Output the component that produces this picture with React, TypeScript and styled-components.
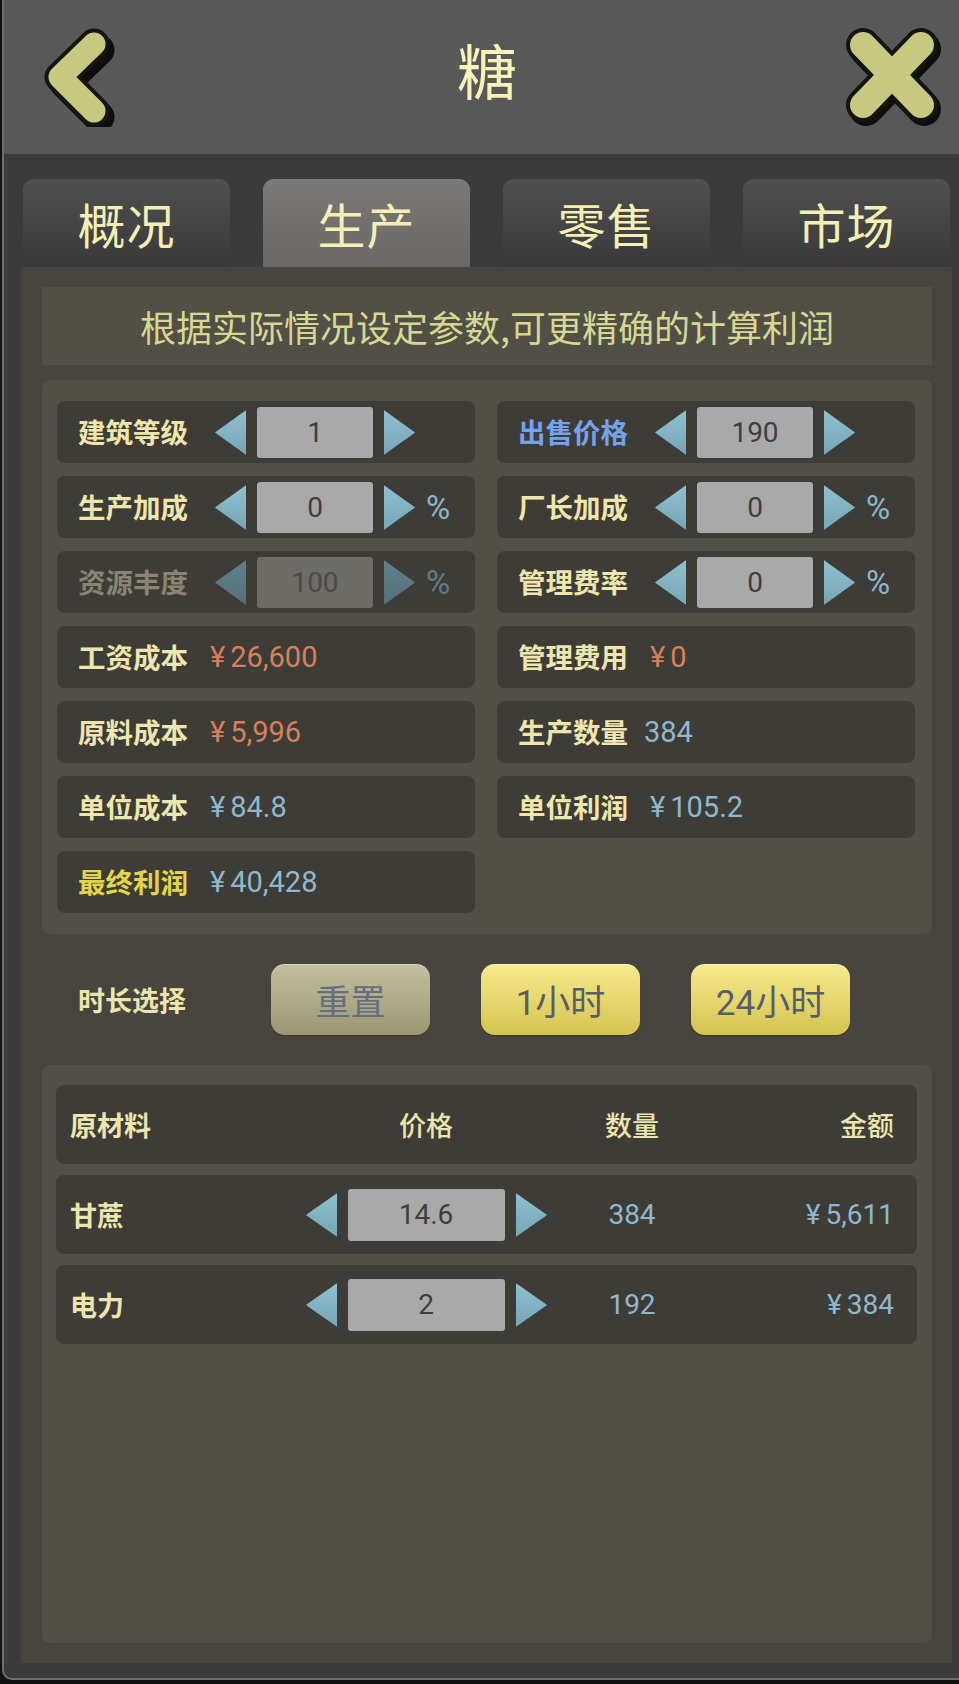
import React from 'react';
import styled, { createGlobalStyle } from 'styled-components';

const GlobalStyle = createGlobalStyle`
  html, body { margin: 0; padding: 0; background: #121212; }
  body { font-family: "Noto Sans CJK SC", Roboto, sans-serif; }
  * { box-sizing: border-box; }
`;

const CJK = `"Noto Sans CJK SC", "Noto Sans", sans-serif`;
const NUM = `Roboto, "Noto Sans CJK SC", sans-serif`;

const Frame = styled.div`
  margin-left: 2px;
  width: 957px;
  height: 1680px;
  border-left: 2px solid #6e6e6e;
  border-bottom: 2px solid #6e6e6e;
  border-bottom-left-radius: 10px;
  background: #3b3b3b;
  display: flex;
  flex-direction: column;
  overflow: hidden;
`;

const Header = styled.header`
  height: 154px;
  flex: none;
  background: #585858;
  display: flex;
  align-items: center;
  justify-content: space-between;
  padding: 0 12px 0 37px;
`;

const Title = styled.h1`
  margin: 0 0 0 18px;
  font-family: ${CJK};
  font-weight: 400;
  font-size: 60px;
  line-height: 1;
  color: #f8f3b8;
  transform: translateY(-8px);
`;

const IconButton = styled.div`
  display: flex;
  align-items: center;
  justify-content: center;
`;

const Body = styled.main`
  flex: 1;
  display: flex;
  flex-direction: column;
  padding: 25px 7px 15px 17px;
`;

const TabRow = styled.nav`
  display: flex;
  gap: 33px;
  padding: 0 2px;
  height: 88px;
  flex: none;
`;

const Tab = styled.div<{ $active?: boolean }>`
  flex: 1;
  display: flex;
  align-items: center;
  justify-content: center;
  border-radius: 11px 11px 0 0;
  background: ${(p) =>
    p.$active
      ? 'linear-gradient(#7b7977, #6a6865)'
      : 'linear-gradient(#505050, #393939)'};
  font-family: ${CJK};
  font-size: 48px;
  color: #f4efb6;
  letter-spacing: 1px;
`;

const Panel = styled.section`
  flex: 1;
  background: #47453e;
  padding: 20px 20px 20px 21px;
  display: flex;
  flex-direction: column;
`;

const Banner = styled.div`
  height: 78px;
  flex: none;
  background: #524f47;
  display: flex;
  align-items: center;
  justify-content: center;
  font-family: ${CJK};
  font-size: 36px;
  color: #d6d892;
  margin-bottom: 15px;
`;

const Card = styled.div`
  background: #524f47;
  border-radius: 8px;
`;

const ParamGrid = styled(Card)`
  flex: none;
  display: grid;
  grid-template-columns: 1fr 1fr;
  grid-auto-rows: 62px;
  column-gap: 22px;
  row-gap: 13px;
  padding: 21px 17px 21px 15px;
`;

const ParamRow = styled.div`
  background: #3e3c37;
  border-radius: 8px;
  display: flex;
  align-items: center;
  padding-left: 21px;
`;

type Tone = 'normal' | 'blue' | 'gold' | 'muted';
const labelColors: Record<Tone, string> = {
  normal: '#efe6ae',
  blue: '#74a2ee',
  gold: '#e2d648',
  muted: '#898570',
};

const Label = styled.span<{ $w: number; $tone?: Tone }>`
  width: ${(p) => p.$w}px;
  flex: none;
  font-family: ${CJK};
  font-weight: 700;
  font-size: 27.5px;
  line-height: 1;
  color: ${(p) => labelColors[p.$tone || 'normal']};
`;

const Value = styled.span<{ $color: 'orange' | 'blue' }>`
  font-family: ${NUM};
  font-size: 29px;
  color: ${(p) => (p.$color === 'orange' ? '#d97f5b' : '#8fb8cf')};
`;

const Yen = styled.span`
  margin-right: 5px;
`;

const InputBox = styled.div<{ $w: number; $h: number; $disabled?: boolean }>`
  width: ${(p) => p.$w}px;
  height: ${(p) => p.$h}px;
  flex: none;
  border-radius: 3px;
  background: ${(p) => (p.$disabled ? '#6e6c67' : '#a9a9a9')};
  color: ${(p) => (p.$disabled ? '#4a4a47' : '#3e3e3e')};
  font-family: ${NUM};
  font-size: 28px;
  display: flex;
  align-items: center;
  justify-content: center;
`;

const Stepper = styled.div<{ $gap: number }>`
  display: flex;
  align-items: center;
  gap: ${(p) => p.$gap}px;
`;

const Percent = styled.span<{ $disabled?: boolean }>`
  font-family: ${NUM};
  font-size: 33px;
  color: ${(p) => (p.$disabled ? '#627c86' : '#8db6cb')};
  margin-left: 11px;
`;

const DurationRow = styled.div`
  height: 131px;
  flex: none;
  display: flex;
  align-items: center;
  padding-left: 36px;
`;

const DurationLabel = styled.span`
  width: 193px;
  font-family: ${CJK};
  font-weight: 700;
  font-size: 27px;
  color: #ece4ae;
`;

const ButtonGroup = styled.div`
  display: flex;
  gap: 51px;
`;

const TimeButton = styled.div<{ $reset?: boolean }>`
  width: 159px;
  height: 71px;
  border-radius: 14px;
  display: flex;
  align-items: center;
  justify-content: center;
  font-family: ${(p) => (p.$reset ? CJK : NUM)};
  font-size: 35px;
  color: ${(p) => (p.$reset ? '#646e80' : '#565e6a')};
  background: ${(p) =>
    p.$reset
      ? 'linear-gradient(#c3bf9f, #9b9773)'
      : 'linear-gradient(#f7ea8e, #d5c350)'};
  box-shadow: inset 0 1px 0 rgba(255, 255, 255, 0.35), 0 1px 1px rgba(0, 0, 0, 0.25);
`;

const MaterialCard = styled(Card)`
  flex: 1;
  display: flex;
  flex-direction: column;
  gap: 11px;
  padding: 20px 15px 20px 14px;
`;

const TableRow = styled.div`
  height: 79px;
  flex: none;
  background: #3e3c37;
  border-radius: 8px;
  display: grid;
  grid-template-columns: 236px 240px 172px 1fr;
  align-items: center;
  padding: 0 23px 0 14px;
`;

const Cell = styled.div<{ $align?: 'left' | 'center' | 'right' }>`
  display: flex;
  justify-content: ${(p) =>
    p.$align === 'center' ? 'center' : p.$align === 'right' ? 'flex-end' : 'flex-start'};
`;

const HeadText = styled.span<{ $bold?: boolean }>`
  font-family: ${CJK};
  font-weight: ${(p) => (p.$bold ? 700 : 500)};
  font-size: 27px;
  color: #ede5ae;
`;

const NumText = styled.span`
  font-family: ${NUM};
  font-size: 28px;
  color: #8fb8cf;
`;

const ArrowSvg = styled.svg`
  flex: none;
  display: block;
`;

let gid = 0;
const Arrow: React.FC<{ dir: 'left' | 'right'; disabled?: boolean; h?: number }> = ({
  dir,
  disabled,
  h = 45,
}) => {
  const id = React.useMemo(() => `ag${gid++}`, []);
  const pts = dir === 'left' ? `1,${h / 2} 31,1 31,${h - 1}` : `0,1 30,${h / 2} 0,${h - 1}`;
  return (
    <ArrowSvg width={31} height={h} viewBox={`0 0 31 ${h}`}>
      <defs>
        <linearGradient id={id} x1="0" y1="0" x2="0" y2="1">
          <stop offset="0" stopColor={disabled ? '#60808a' : '#8fc0cf'} />
          <stop offset="1" stopColor={disabled ? '#56707a' : '#76a6b6'} />
        </linearGradient>
      </defs>
      <polygon points={pts} fill={`url(#${id})`} strokeLinejoin="round" stroke={`url(#${id})`} strokeWidth={1.5} />
    </ArrowSvg>
  );
};

const BackIcon = () => (
  <svg width="74" height="100" viewBox="0 0 74 100">
    <polyline points="55,19 21,52 55,86" fill="none" stroke="#0e0e0c" strokeWidth="31" strokeLinecap="round" strokeLinejoin="round" transform="translate(3,4)" />
    <polyline points="53,17 19,50 53,84" fill="none" stroke="#15150f" strokeWidth="31" strokeLinecap="round" strokeLinejoin="round" />
    <polyline points="53,17 19,50 53,84" fill="none" stroke="#c8c880" strokeWidth="23" strokeLinecap="round" strokeLinejoin="round" />
  </svg>
);

const CloseIcon = () => (
  <svg width="106" height="104" viewBox="0 0 106 104">
    <g transform="translate(3,4)" stroke="#0e0e0c" strokeWidth="34" strokeLinecap="round">
      <line x1="22" y1="20" x2="80" y2="80" />
      <line x1="80" y1="20" x2="22" y2="80" />
    </g>
    <g stroke="#15150f" strokeWidth="34" strokeLinecap="round">
      <line x1="22" y1="20" x2="80" y2="80" />
      <line x1="80" y1="20" x2="22" y2="80" />
    </g>
    <g stroke="#c8c880" strokeWidth="26" strokeLinecap="round">
      <line x1="22" y1="20" x2="80" y2="80" />
      <line x1="80" y1="20" x2="22" y2="80" />
    </g>
  </svg>
);

const Money: React.FC<{ v: string }> = ({ v }) =>
  v.startsWith('¥') ? (
    <>
      <Yen>¥</Yen>
      {v.slice(1)}
    </>
  ) : (
    <>{v}</>
  );

type StepRow = { kind: 'step'; label: string; value: string; pct?: boolean; tone?: Tone; disabled?: boolean };
type ValRow = { kind: 'val'; label: string; value: string; color: 'orange' | 'blue'; tone?: Tone };
type Row = StepRow | ValRow;

const rows: Row[] = [
  { kind: 'step', label: '建筑等级', value: '1' },
  { kind: 'step', label: '出售价格', value: '190', tone: 'blue' },
  { kind: 'step', label: '生产加成', value: '0', pct: true },
  { kind: 'step', label: '厂长加成', value: '0', pct: true },
  { kind: 'step', label: '资源丰度', value: '100', pct: true, tone: 'muted', disabled: true },
  { kind: 'step', label: '管理费率', value: '0', pct: true },
  { kind: 'val', label: '工资成本', value: '¥26,600', color: 'orange' },
  { kind: 'val', label: '管理费用', value: '¥0', color: 'orange' },
  { kind: 'val', label: '原料成本', value: '¥5,996', color: 'orange' },
  { kind: 'val', label: '生产数量', value: '384', color: 'blue' },
  { kind: 'val', label: '单位成本', value: '¥84.8', color: 'blue' },
  { kind: 'val', label: '单位利润', value: '¥105.2', color: 'blue' },
  { kind: 'val', label: '最终利润', value: '¥40,428', color: 'blue', tone: 'gold' },
];

const materials = [
  { name: '甘蔗', price: '14.6', qty: '384', amount: '¥5,611' },
  { name: '电力', price: '2', qty: '192', amount: '¥384' },
];

export default function App() {
  return (
    <>
      <GlobalStyle />
      <Frame>
        <Header>
          <IconButton>
            <BackIcon />
          </IconButton>
          <Title>糖</Title>
          <IconButton>
            <CloseIcon />
          </IconButton>
        </Header>
        <Body>
          <TabRow>
            <Tab>概况</Tab>
            <Tab $active>生产</Tab>
            <Tab>零售</Tab>
            <Tab>市场</Tab>
          </TabRow>
          <Panel>
            <Banner>根据实际情况设定参数,可更精确的计算利润</Banner>
            <ParamGrid>
              {rows.map((r, i) =>
                r.kind === 'step' ? (
                  <ParamRow key={i}>
                    <Label $w={137} $tone={r.tone}>{r.label}</Label>
                    <Stepper $gap={11}>
                      <Arrow dir="left" disabled={r.disabled} />
                      <InputBox $w={116} $h={51} $disabled={r.disabled}>{r.value}</InputBox>
                      <Arrow dir="right" disabled={r.disabled} />
                    </Stepper>
                    {r.pct && <Percent $disabled={r.disabled}>%</Percent>}
                  </ParamRow>
                ) : (
                  <ParamRow key={i}>
                    <Label $w={r.value.startsWith('¥') ? 132 : 126} $tone={r.tone}>{r.label}</Label>
                    <Value $color={r.color}>
                      <Money v={r.value} />
                    </Value>
                  </ParamRow>
                )
              )}
            </ParamGrid>
            <DurationRow>
              <DurationLabel>时长选择</DurationLabel>
              <ButtonGroup>
                <TimeButton $reset>重置</TimeButton>
                <TimeButton>1小时</TimeButton>
                <TimeButton>24小时</TimeButton>
              </ButtonGroup>
            </DurationRow>
            <MaterialCard>
              <TableRow>
                <Cell>
                  <HeadText $bold>原材料</HeadText>
                </Cell>
                <Cell $align="center">
                  <HeadText>价格</HeadText>
                </Cell>
                <Cell $align="center">
                  <HeadText>数量</HeadText>
                </Cell>
                <Cell $align="right">
                  <HeadText>金额</HeadText>
                </Cell>
              </TableRow>
              {materials.map((m) => (
                <TableRow key={m.name}>
                  <Cell>
                    <HeadText $bold>{m.name}</HeadText>
                  </Cell>
                  <Cell $align="center">
                    <Stepper $gap={11}>
                      <Arrow dir="left" h={44} />
                      <InputBox $w={157} $h={52}>{m.price}</InputBox>
                      <Arrow dir="right" h={44} />
                    </Stepper>
                  </Cell>
                  <Cell $align="center">
                    <NumText>{m.qty}</NumText>
                  </Cell>
                  <Cell $align="right">
                    <NumText>
                      <Money v={m.amount} />
                    </NumText>
                  </Cell>
                </TableRow>
              ))}
            </MaterialCard>
          </Panel>
        </Body>
      </Frame>
    </>
  );
}
